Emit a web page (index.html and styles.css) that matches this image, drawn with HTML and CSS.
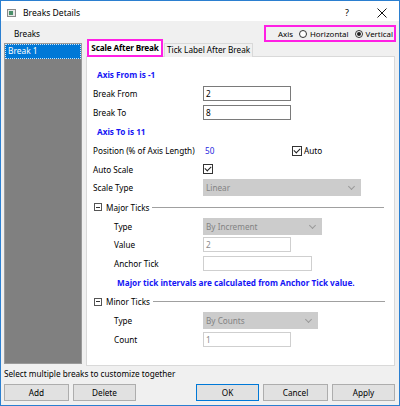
FILE: index.html
```html
<!DOCTYPE html>
<html>
<head>
<meta charset="utf-8">
<link rel="stylesheet" href="styles.css">
</head>
<body>
<div class="dialog">
  <div class="titlebar">
    <span class="app-icon"><span class="app-icon-inner"></span></span>
    <span class="title">Breaks Details</span>
    <span class="spacer"></span>
    <span class="help">?</span>
    <span class="close">
      <svg width="10" height="10" viewBox="0 0 10 10"><path d="M0.5 0.5 L9.5 9.5 M9.5 0.5 L0.5 9.5" stroke="#111" stroke-width="1" fill="none"/></svg>
    </span>
  </div>
  <div class="header">
    <span class="breaks-label">Breaks</span>
    <span class="spacer"></span>
    <div class="axis-group">
      <span>Axis</span>
      <span class="radio"></span><span>Horizontal</span>
      <span class="radio checked"></span><span>Vertical</span>
    </div>
  </div>
  <div class="main">
    <div class="list">
      <div class="list-item">Break 1</div>
    </div>
    <div class="tabs-area">
      <div class="tabstrip">
        <div class="tab active">Scale After Break</div>
        <div class="tab">Tick Label After Break</div>
      </div>
      <div class="panel">
        <div class="row h20"><span class="note">Axis From is -1</span></div>
        <div class="row h19"><span class="label">Break From</span><span class="input">2</span></div>
        <div class="row h19"><span class="label">Break To</span><span class="input">8</span></div>
        <div class="row h19"><span class="note">Axis To is 11</span></div>
        <div class="row h19"><span class="label">Position (% of Axis Length)</span><span class="value">50</span><span class="check checked auto"></span><span>Auto</span></div>
        <div class="row h18"><span class="label">Auto Scale</span><span class="check checked"></span></div>
        <div class="row h19"><span class="label">Scale Type</span><span class="select w158">Linear<span class="chev"></span></span></div>
        <div class="row h20 group"><span class="minus"></span><span class="group-title">Major Ticks</span><span class="rule"></span></div>
        <div class="row h18"><span class="label sub">Type</span><span class="select w119">By Increment<span class="chev"></span></span></div>
        <div class="row h19"><span class="label sub">Value</span><span class="input disabled">2</span></div>
        <div class="row h19"><span class="label sub">Anchor Tick</span><span class="input disabled w109"></span></div>
        <div class="row h19"><span class="note indent">Major tick intervals are calculated from Anchor Tick value.</span></div>
        <div class="row h19 group"><span class="minus"></span><span class="group-title">Minor Ticks</span><span class="rule"></span></div>
        <div class="row h18"><span class="label sub">Type</span><span class="select w115">By Counts<span class="chev"></span></span></div>
        <div class="row h20"><span class="label sub">Count</span><span class="input disabled">1</span></div>
      </div>
    </div>
  </div>
  <div class="status">Select multiple breaks to customize together</div>
  <div class="buttons">
    <span class="btn w64">Add</span>
    <span class="btn w62">Delete</span>
    <span class="spacer"></span>
    <span class="btn default w62">OK</span>
    <span class="btn w64">Cancel</span>
    <span class="btn w62">Apply</span>
  </div>
</div>
</body>
</html>
```
FILE: styles.css
```css
* { box-sizing: border-box; }
html, body { margin: 0; padding: 0; }
body {
  font-family: "Noto Sans", "Open Sans", sans-serif;
  font-size: 8.2px;
  color: #000;
}
.dialog {
  width: 400px;
  height: 406px;
  background: #f0f0f0;
  border: 1px solid #2b7fd0;
  display: flex;
  flex-direction: column;
  overflow: hidden;
}
.spacer { flex: 1; }
.titlebar {
  height: 20px;
  background: #fff;
  display: flex;
  align-items: center;
  padding-left: 6px;
  padding-right: 12px;
  padding-top: 3px;
}
.app-icon {
  width: 9px;
  height: 8px;
  border: 1px solid #8a8a8a;
  background: #e8e8e8;
  display: flex;
  align-items: center;
  padding-left: 1px;
}
.app-icon-inner {
  width: 4px;
  height: 4px;
  background: #4a8f6a;
}
.title { margin-left: 7px; font-size: 8.6px; }
.help { margin-right: 28px; font-size: 9px; }
.close { display: flex; }
.header {
  height: 21px;
  display: flex;
  align-items: center;
  padding-left: 13px;
  padding-right: 3px;
  margin-top: 2px;
}
.axis-group {
  display: flex;
  align-items: center;
  height: 17px;
  border: 2px solid #ff1fe4;
  padding: 0 1px 0 12px;
  gap: 3px;
  font-size: 7.9px;
}
.radio {
  width: 8px;
  height: 8px;
  border: 1px solid #333;
  border-radius: 50%;
  background: #fff;
  margin-left: 3px;
  display: flex;
  align-items: center;
  justify-content: center;
}
.radio.checked::after {
  content: "";
  width: 4px;
  height: 4px;
  border-radius: 50%;
  background: #222;
}
.main {
  display: flex;
  height: 327px;
  margin-top: -5px;
}
.list {
  margin-left: 3px;
  margin-top: 4px;
  width: 78px;
  height: 321px;
  background: #808080;
  border: 1px solid #9a9a9a;
}
.list-item {
  height: 15px;
  background: #0078d7;
  color: #fff;
  border: 1px dotted #cfe4f7;
  padding-left: 2px;
  line-height: 12px;
  font-size: 8.4px;
}
.tabs-area {
  margin-left: 4px;
  width: 309px;
  display: flex;
  flex-direction: column;
}
.tabstrip {
  display: flex;
  align-items: flex-end;
  height: 18px;
  position: relative;
  z-index: 1;
}
.tab {
  height: 14px;
  line-height: 12px;
  padding: 0 2px;
  border: 1px solid #d9d9d9;
  border-bottom: none;
  background: #f0f0f0;
  margin-left: 1px;
  width: 89px;
  text-align: center;
  white-space: nowrap;
}
.tab.active {
  height: 18px;
  line-height: 14px;
  width: 76px;
  margin-left: 1px;
  padding: 0;
  background: #fff;
  border: 2px solid #ff1fe4;
  font-weight: bold;
  letter-spacing: -0.15px;
}
.panel {
  background: #fff;
  border: 1px solid #d9d9d9;
  height: 310px;
  margin-top: -1px;
  padding: 7px 0 0 6px;
}
.row {
  display: flex;
  align-items: center;
  white-space: nowrap;
}
.h18 { height: 18px; }
.h19 { height: 19px; }
.h20 { height: 20px; }
.label { width: 110px; flex: none; }
.label.sub { padding-left: 21px; }
.note {
  color: #1515f5;
  font-weight: bold;
  padding-left: 4px;
}
.note.indent { padding-left: 24px; }
.input {
  width: 88px;
  height: 15px;
  border: 1px solid #7a7a7a;
  background: #fff;
  padding-left: 2px;
  line-height: 13px;
}
.input.disabled {
  border-color: #cfcfcf;
  color: #8a8a8a;
}
.w109 { width: 109px !important; }
.value { color: #1f1fe0; width: 89px; padding-left: 2px; }
.check {
  width: 10px;
  height: 10px;
  border: 1px solid #333;
  background: #fff;
  display: inline-flex;
  align-items: center;
  justify-content: center;
  margin-right: 2px;
}
.check.checked::after {
  content: "";
  width: 5px;
  height: 3px;
  border-left: 1px solid #222;
  border-bottom: 1px solid #222;
  transform: translateY(-1px) rotate(-45deg);
}
.select {
  height: 17px;
  background: #cccccc;
  color: #838383;
  padding-left: 3px;
  display: flex;
  align-items: center;
  justify-content: space-between;
  padding-right: 7px;
}
.w158 { width: 158px; }
.w119 { width: 119px; }
.w115 { width: 115px; }
.chev {
  width: 5px;
  height: 5px;
  border-right: 1px solid #9a9a9a;
  border-bottom: 1px solid #9a9a9a;
  transform: translateY(-1px) rotate(45deg);
}
.minus {
  width: 8px;
  height: 8px;
  border: 1px solid #555;
  display: inline-flex;
  align-items: center;
  justify-content: center;
  margin-left: 1px;
  margin-right: 4px;
}
.minus::after {
  content: "";
  width: 4px;
  height: 1px;
  background: #333;
}
.group-title { margin-right: 3px; }
.rule {
  width: 232px;
  height: 1px;
  background: #a0a0a0;
}
.status {
  height: 18px;
  padding-left: 3px;
  padding-top: 2px;
}
.buttons {
  display: flex;
  padding: 0 4px 0 3px;
  gap: 4px;
}
.btn {
  height: 17px;
  background: #e1e1e1;
  border: 1px solid #adadad;
  display: inline-flex;
  align-items: center;
  justify-content: center;
}
.btn.default { border-color: #0078d7; }
.w64 { width: 65px; }
.w62 { width: 63px; }
```
